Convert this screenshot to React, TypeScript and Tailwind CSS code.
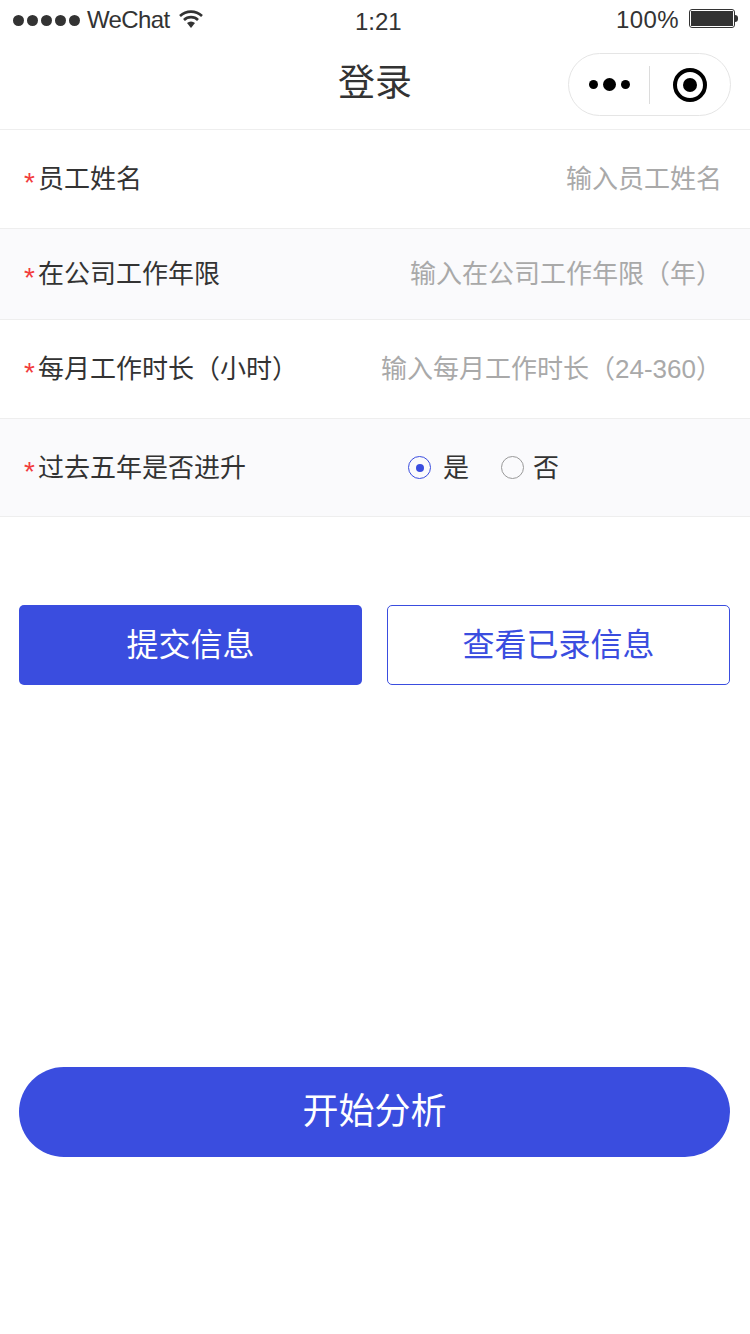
const FF = "font-['Liberation_Sans','Noto_Sans_CJK_SC',sans-serif]";

function Row({ label, placeholder, tint, h, children, starTop }: { label: string; placeholder?: string; tint?: boolean; h: string; children?: React.ReactNode; starTop?: string }) {
  return (
    <div className={`flex items-center justify-between ${h} pl-[24px] pr-[28px] border-b border-[#eeeeee] ${tint ? "bg-[#fafafc]" : "bg-white"}`}>
      <div className="flex items-center text-[26px] text-[#333333] leading-none">
        <span className="text-[#f23c3c] w-[14px] text-[28px] leading-none pt-[8px]">*</span>
        <span>{label}</span>
      </div>
      {placeholder ? <div className="text-[26px] text-[#a9a9a9] leading-none">{placeholder}</div> : children}
    </div>
  );
}

export default function App() {
  return (
    <div className={`w-[750px] h-[1334px] bg-white ${FF} overflow-hidden`}>
      <div className="flex items-center h-[40px] px-[13px] text-[24px] text-[#333333] relative">
        <div className="flex gap-[3px] w-[71px]">
          {[0, 1, 2, 3, 4].map((i) => <span key={i} className="w-[11px] h-[11px] rounded-full bg-[#333333]" />)}
        </div>
        <span className="ml-[3px] tracking-[-0.6px]">WeChat</span>
        <svg width="26" height="20" viewBox="0 0 26 20" className="ml-[8px] mb-[3px]">
          <path d="M2 7 A16 16 0 0 1 24 7" fill="none" stroke="#333" strokeWidth="2.6" />
          <path d="M6 11 A10 10 0 0 1 20 11" fill="none" stroke="#333" strokeWidth="2.6" />
          <path d="M9 14 A6 6 0 0 1 17 14 L13 19 Z" fill="#333" />
        </svg>
        <span className="absolute left-[355px] top-[8px] leading-[28px]">1:21</span>
        <span className="ml-auto mr-[10px] tracking-[0.4px]">100%</span>
        <div className="flex items-center mr-[-1px] mb-[4px]">
          <div className="w-[46px] h-[19px] border border-[#333333] rounded-[3px] p-[1px]"><div className="w-full h-full bg-[#333333]" /></div>
          <div className="w-[3px] h-[7px] bg-[#333333] rounded-r-full" />
        </div>
      </div>
      <div className="relative flex items-center justify-center h-[90px] border-b border-[#eeeeee]">
        <span className="text-[37px] text-[#333333] leading-none mt-[-2px]">登录</span>
        <div className="absolute left-[568px] top-[13px] w-[163px] h-[63px] rounded-full border border-[#e5e5e5] flex items-center">
          <div className="flex items-center justify-center gap-[5px] w-[81px] h-[38px] border-r border-[#dcdcdc]">
            <span className="w-[9px] h-[9px] rounded-full bg-black" />
            <span className="w-[13px] h-[13px] rounded-full bg-black" />
            <span className="w-[9px] h-[9px] rounded-full bg-black" />
          </div>
          <div className="flex-1 flex justify-center">
            <div className="w-[34px] h-[34px] rounded-full border-[4px] border-black flex items-center justify-center">
              <div className="w-[14px] h-[14px] rounded-full bg-black" />
            </div>
          </div>
        </div>
      </div>
      <Row label="员工姓名" placeholder="输入员工姓名" h="h-[99px]" />
      <Row label="在公司工作年限" placeholder="输入在公司工作年限（年）" tint h="h-[91px]" />
      <Row label="每月工作时长（小时）" placeholder="输入每月工作时长（24-360）" h="h-[99px]" />
      <Row label="过去五年是否进升" tint h="h-[98px]">
        <div className="flex items-center text-[26px] text-[#333333] w-[342px] ml-auto mr-[-28px] leading-none">
          <span className="w-[23px] h-[23px] rounded-full border border-[#3a4ddf] flex items-center justify-center"><span className="w-[8px] h-[8px] rounded-full bg-[#3a4ddf]" /></span>
          <span className="ml-[12px]">是</span>
          <span className="ml-[32px] w-[23px] h-[23px] rounded-full border border-[#999999]" />
          <span className="ml-[9px]">否</span>
        </div>
      </Row>
      <div className="flex justify-between pl-[19px] pr-[20px] mt-[88px]">
        <button className="w-[343px] h-[80px] rounded-[5px] bg-[#3a4ddf] text-white text-[32px]">提交信息</button>
        <button className="w-[343px] h-[80px] rounded-[5px] border border-[#3a4ddf] text-[#3a4ddf] text-[32px] bg-white">查看已录信息</button>
      </div>
      <div className="pl-[19px] pr-[20px] mt-[382px]">
        <button className="w-full h-[90px] rounded-full bg-[#3a4ddf] text-white text-[36px]">开始分析</button>
      </div>
    </div>
  );
}
